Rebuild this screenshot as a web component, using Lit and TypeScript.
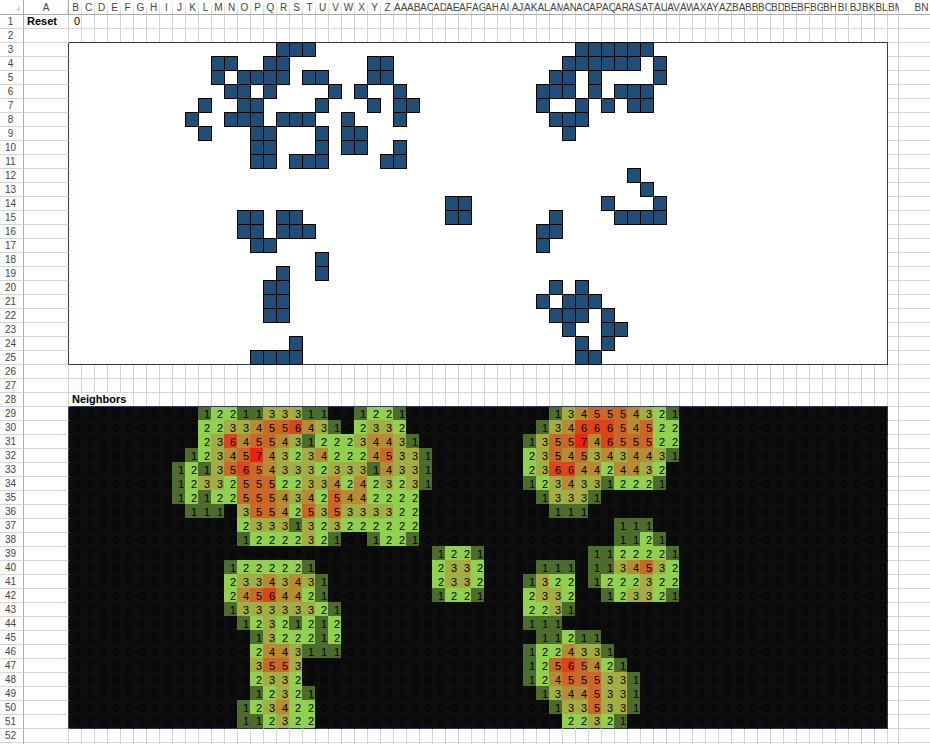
import { LitElement, html, css, nothing } from "lit";
import { customElement, property } from "lit/decorators.js";
import { classMap } from "lit/directives/class-map.js";

const COLS = 63;
const ROWS = 23;
const LIFE_TOP = 3;
const COUNT_TOP = 29;
const LAST_ROW = 53;

// Live column indexes for each generation row, column B being 0.
const LIVE: number[][] = [
  [16, 17, 18, 39, 40, 41, 42, 43, 44],
  [11, 12, 15, 16, 23, 24, 38, 39, 40, 41, 42, 43, 45],
  [11, 13, 14, 15, 16, 18, 19, 23, 24, 37, 38, 40, 45],
  [12, 13, 15, 20, 22, 25, 36, 37, 38, 40, 42, 43, 44],
  [10, 13, 14, 19, 23, 25, 26, 36, 39, 41, 43, 44],
  [9, 12, 13, 14, 16, 17, 18, 21, 25, 37, 38, 39],
  [10, 14, 15, 19, 21, 22, 38],
  [14, 15, 19, 21, 22, 25],
  [14, 15, 17, 18, 19, 24, 25],
  [43],
  [44],
  [29, 30, 41, 45],
  [13, 14, 16, 17, 29, 30, 37, 42, 43, 44, 45],
  [13, 14, 16, 17, 18, 36, 37],
  [14, 15, 36],
  [19],
  [16, 19],
  [15, 16, 37, 39],
  [15, 16, 36, 38, 39, 40],
  [15, 16, 37, 38, 39, 41],
  [38, 41, 42],
  [17, 39, 41],
  [14, 15, 16, 17, 39, 40],
];

const alive = (r: number, c: number) => (LIVE[r]?.includes(c) ? 1 : 0);

function neighbors(r: number, c: number): number {
  let n = -alive(r, c);
  for (let dr = -1; dr <= 1; dr++)
    for (let dc = -1; dc <= 1; dc++) n += alive(r + dr, c + dc);
  return n;
}

// 0 -> B, 25 -> AA, and so on.
function columnName(i: number): string {
  const n = i + 1;
  const last = String.fromCharCode(65 + (n % 26));
  return n < 26 ? last : String.fromCharCode(64 + Math.floor(n / 26)) + last;
}

const range = (n: number) => Array.from({ length: n }, (_, i) => i);

@customElement("life-sheet")
export class LifeSheet extends LitElement {
  @property({ type: Number }) reset = 0;

  static styles = css`
    :host {
      display: block;
    }
    table {
      table-layout: fixed;
      border-collapse: separate;
      border-spacing: 0;
      width: 943px;
    }
    .c-row { width: 24px; }
    .c-a, .c-wide { width: 45px; }
    .c-cell { width: 13px; }
    .c-slim { width: 11px; }
    th, td {
      box-sizing: border-box;
      height: 14px;
      padding: 0;
      overflow: hidden;
      white-space: nowrap;
      text-align: center;
      vertical-align: top;
      line-height: 13px;
      font-size: 11px;
      font-weight: 400;
      border: 0 solid #d4d4d4;
      border-width: 0 1px 1px 0;
    }
    th {
      color: #444;
      font-size: 10px;
    }
    thead th {
      height: 15px;
      padding-top: 2px;
      line-height: 12px;
      border-color: #ababab;
      border-right: 0;
      background: linear-gradient(#fff, #d0d0d0) right / 1px 100% no-repeat;
    }
    thead .corner {
      background: linear-gradient(135deg, transparent 50%, #dadada 50%) 15px 6px / 5px 5px no-repeat;
      border-right: 1px solid #ababab;
    }
    thead .edge { border-right: 1px solid #ababab; }
    tbody th {
      border-right-color: #ababab;
      padding-right: 2px;
    }
    .before { border-right-color: #2f3b52; }
    .bold {
      text-align: left;
      font-weight: 700;
      padding-left: 3px;
    }
    .digit {
      text-align: right;
      padding-right: 1px;
    }
    .life { border-color: transparent; }
    .head { box-shadow: 0 -1px #2f3b52; }
    .foot {
      border-right-width: 0;
      border-bottom-color: #2f3b52;
    }
    .side {
      border-right-width: 1px;
      border-right-color: #2f3b52;
    }
    .side:not(.foot) { border-bottom-width: 0; }
    .live {
      background: #1f4e79;
      border-width: 0 1px 1px 0;
      border-color: #000;
      box-shadow: -1px 0 #000, 0 -1px #000, -1px -1px #000;
    }
    /* Fills also cover the gridline above and to the left of the cell. */
    .count {
      border: 0;
      padding-right: 2px;
      text-align: right;
      line-height: 14px;
      background: var(--fill);
      box-shadow: -1px 0 var(--fill), 0 -1px var(--fill), -1px -1px var(--fill);
    }
    .count.lead { box-shadow: 0 -1px var(--fill); }
    .count.head { box-shadow: -1px 0 var(--fill), 0 -1px #2f3b52; }
    .count.head.lead { box-shadow: 0 -1px #2f3b52; }
    .count.foot {
      border-bottom: 1px solid #2f3b52;
      line-height: 13px;
    }
    .count.side {
      border-right: 1px solid #2f3b52;
      padding-right: 1px;
    }
    .n0 { --fill: #0d0d0d; }
    .n1 { --fill: #4d6b2c; }
    .n2 { --fill: #92d050; }
    .n3 { --fill: #a4ad43; }
    .n4 { --fill: #b68b35; }
    .n5 { --fill: #c96828; }
    .n6 { --fill: #db451b; }
    .n7 { --fill: #ed230d; }
  `;

  private lifeCell(r: number, c: number) {
    return html`<td class=${classMap({
      life: true,
      head: r === 0,
      foot: r === ROWS - 1,
      side: c === COLS - 1,
      live: !!alive(r, c),
    })}></td>`;
  }

  private countCell(r: number, c: number) {
    const n = neighbors(r, c);
    return html`<td class=${classMap({
      count: true,
      [`n${n}`]: true,
      lead: c === 0,
      head: r === 0,
      foot: r === ROWS - 1,
      side: c === COLS - 1,
    })}>${n}</td>`;
  }

  private cells(row: number) {
    const life = row - LIFE_TOP;
    const count = row - COUNT_TOP;
    if (life >= 0 && life < ROWS) return range(COLS).map((c) => this.lifeCell(life, c));
    if (count >= 0 && count < ROWS) return range(COLS).map((c) => this.countCell(count, c));
    if (row === COUNT_TOP - 1)
      return html`<td class="bold" colspan="5">Neighbors</td>
        ${range(COLS - 5).map(() => html`<td></td>`)}`;
    return range(COLS).map((c) =>
      row === 1 && c === 0 ? html`<td class="digit">${this.reset}</td>` : html`<td></td>`
    );
  }

  private row(row: number) {
    const boxed =
      (row >= LIFE_TOP && row < LIFE_TOP + ROWS) ||
      (row >= COUNT_TOP && row < COUNT_TOP + ROWS);
    return html`<tr>
      <th scope="row">${row}</th>
      <td class=${classMap({ before: boxed, bold: row === 1 })}>${row === 1 ? "Reset" : nothing}</td>
      ${this.cells(row)}
      <td></td>
      <td></td>
    </tr>`;
  }

  render() {
    return html`<table>
      <colgroup>
        <col class="c-row" />
        <col class="c-a" />
        <col class="c-cell" span=${COLS} />
        <col class="c-slim" />
        <col class="c-wide" />
      </colgroup>
      <thead>
        <tr>
          <th class="corner"></th>
          <th class="edge" scope="col">A</th>
          ${range(COLS + 2).map((c) => html`<th scope="col">${columnName(c)}</th>`)}
        </tr>
      </thead>
      <tbody>
        ${range(LAST_ROW).map((i) => this.row(i + 1))}
      </tbody>
    </table>`;
  }
}

@customElement("app-root")
export class AppRoot extends LitElement {
  static styles = css`
    :host {
      display: block;
      height: 100vh;
      overflow: hidden;
      background: #fff;
      color: #000;
      font-family: "Liberation Sans", Arial, sans-serif;
    }
  `;

  render() {
    return html`<life-sheet></life-sheet>`;
  }
}
